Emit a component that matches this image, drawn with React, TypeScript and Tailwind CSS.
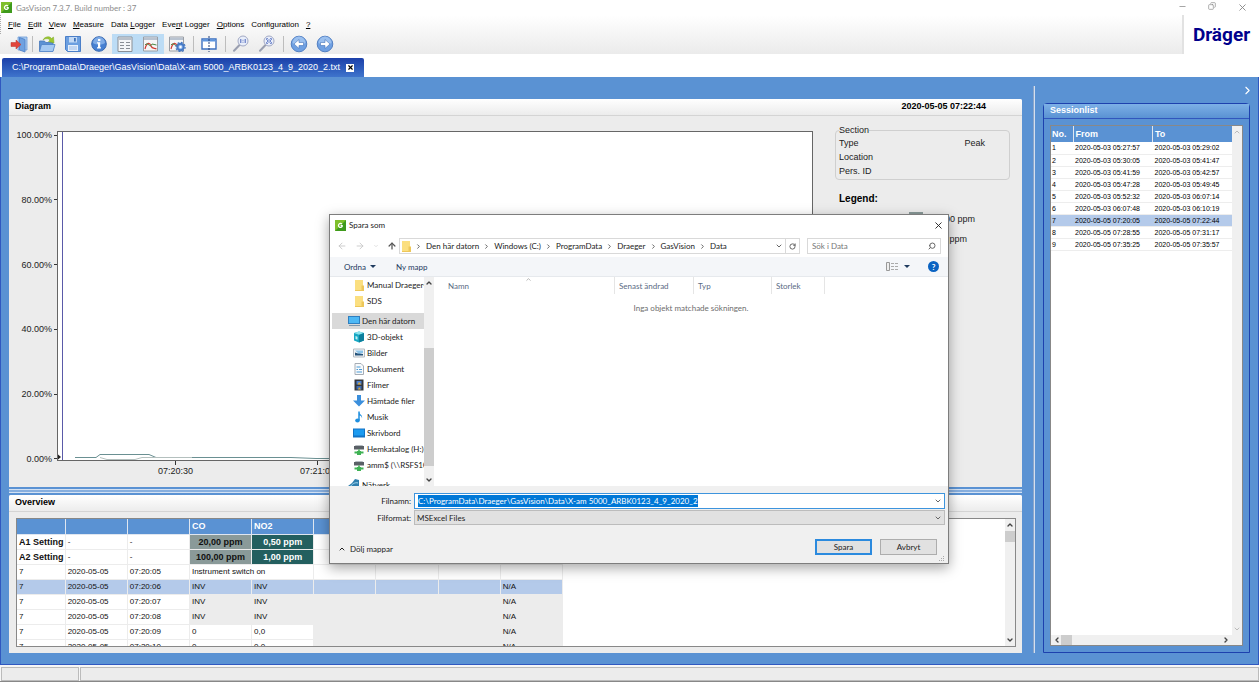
import { useEffect, useRef } from 'react';
import type { ReactNode } from 'react';
import {
  ArrowLeft, ArrowRight, ArrowUp, ChevronDown, ChevronLeft, ChevronRight, ChevronUp, Copy, Minus, RotateCw, Search, X,
} from 'lucide-react';

const FILE_PATH = 'C:\\ProgramData\\Draeger\\GasVision\\Data\\X-am 5000_ARBK0123_4_9_2020_2';

const MENU = [
  ['', 'F', 'ile'],
  ['', 'E', 'dit'],
  ['', 'V', 'iew'],
  ['', 'M', 'easure'],
  ['Data ', 'L', 'ogger'],
  ['Eve', 'n', 't Logger'],
  ['', 'O', 'ptions'],
  ['Confi', 'g', 'uration'],
  ['', '?', ''],
];

const SESSIONS = [
  ['1', '2020-05-03 05:27:57', '2020-05-03 05:29:02'],
  ['2', '2020-05-03 05:30:05', '2020-05-03 05:41:47'],
  ['3', '2020-05-03 05:41:59', '2020-05-03 05:42:57'],
  ['4', '2020-05-03 05:47:28', '2020-05-03 05:49:45'],
  ['5', '2020-05-03 05:52:32', '2020-05-03 06:07:14'],
  ['6', '2020-05-03 06:07:48', '2020-05-03 06:10:19'],
  ['7', '2020-05-05 07:20:05', '2020-05-05 07:22:44'],
  ['8', '2020-05-05 07:28:55', '2020-05-05 07:31:17'],
  ['9', '2020-05-05 07:35:25', '2020-05-05 07:35:57'],
];

const READINGS = [
  { time: '07:20:06', co: 'INV', no2: 'INV', selected: true },
  { time: '07:20:07', co: 'INV', no2: 'INV' },
  { time: '07:20:08', co: 'INV', no2: 'INV' },
  { time: '07:20:09', co: '0', no2: '0,0' },
  { time: '07:20:10', co: '0', no2: '0,0' },
];

const CRUMBS = ['Den här datorn', 'Windows (C:)', 'ProgramData', 'Draeger', 'GasVision', 'Data'];

/* ---------- icons ---------- */

const AppIcon = () => (
  <svg className="size-[11px] shrink-0" viewBox="0 0 11 11">
    <rect width="11" height="11" fill="#3f9a1c" />
    <path d="M0 0h11L0 11z" fill="#7fbf2a" />
    <path d="M7 4.2A2 2 0 1 0 7.2 6.4V5.6H5.6" fill="none" stroke="#fff" strokeWidth="1.2" />
  </svg>
);

const FolderIcon = () => (
  <svg className="h-[11px] w-[9px] shrink-0" viewBox="0 0 9 11">
    <path d="M0 0h8v10.5H0z" fill="#fbdf80" />
    <path d="M6.5 5.5H9V11H6.5zM0 10h8v1H0z" fill="#edc75a" />
  </svg>
);

const ExitIcon = () => (
  <svg width="18" height="18" viewBox="0 0 18 18">
    <path d="M8 2h9v13H8z" fill="#a9cbf0" stroke="#6d9bd6" strokeWidth=".8" />
    <path d="M9.500 2.500L15 4.500V17l-5.500-2z" fill="#6fa1e0" stroke="#4d7fc6" strokeWidth=".8" />
    <path d="M1 7.500h5V5l5 4.500L6 14v-2.500H1z" fill="#e2453c" stroke="#b8342d" strokeWidth=".5" />
  </svg>
);

const OpenIcon = () => (
  <svg width="18" height="18" viewBox="0 0 18 18">
    <path d="M1.500 6h5l1 1.500H15V16H1.500z" fill="#5c91d4" stroke="#4878ba" strokeWidth=".8" />
    <path d="M3.500 9.500H17L15 16.500H1.500z" fill="#a5c9f2" stroke="#4d82c8" strokeWidth=".8" />
    <path d="M5 5C7 1 12 1 13.500 3.500L15.500 2l.5 6-5.500-1.500L12 5c-2-2-5-1.500-7 0z" fill="#9cc72f" stroke="#7aa826" strokeWidth=".5" />
  </svg>
);

const SaveIcon = () => (
  <svg width="18" height="18" viewBox="0 0 18 18">
    <path d="M1.500 1.500h15v15h-13l-2-2z" fill="#6c9fe0" stroke="#4b7fc8" />
    <path d="M5 2h8v5.500H5z" fill="#c4daf5" />
    <path d="M10 3h1.800v3.500H10z" fill="#3d70b8" />
    <path d="M4 10h10v6H4z" fill="#e6effb" />
    <path d="M5 12h8M5 14h8" stroke="#9dbce6" />
  </svg>
);

const InfoIcon = () => (
  <svg width="16" height="16" viewBox="0 0 16 16">
    <circle cx="8" cy="8" r="7.300" fill="#4680d2" stroke="#3a69b0" />
    <path d="M2 7a6 6 0 0 1 12 0c-3 2-9 2-12 0z" fill="#7eabe6" />
    <path d="M7 3h2.400v2H7zM6 6.300h3.200v5H10v1.200H6v-1.200h1V7.500H6z" fill="#fff" />
  </svg>
);

const ListIcon = () => (
  <svg width="16" height="16" viewBox="0 0 16 16">
    <path d="M1 1h14v14.500H1z" fill="#f4f6f8" stroke="#8a8f96" />
    <path d="M1.500 1.500h13v2.500h-13z" fill="#b9c1cb" />
    <path d="M3 6.500h4M3 9.500h4M3 12.500h4M9 6.500H13M9 9.500H13M9 12.500H13" stroke="#8a8f96" />
  </svg>
);

const CurveIcon = ({ gear = false }) => (
  <svg width="18" height="16" viewBox="0 0 18 16">
    <path d="M1.500 1h14v14h-14z" fill="#f6f6f6" stroke="#9a9ea4" />
    <path d="M2 1.500h13V4H2z" fill="#b9c3d0" />
    <path d="M3 13c2-8 5-6 6-3s3 2 5.500 3" fill="none" stroke="#cf3b33" strokeWidth="1.200" />
    <path d="M3 9c3-4 5 4 7-1l4.500 1" fill="none" stroke="#4b8a45" />
    {gear && (
      <g>
        <circle cx="12.500" cy="11" r="3.200" fill="#8fb8ee" stroke="#4679c4" strokeWidth="2" />
        <circle cx="12.500" cy="11" r="4.600" fill="none" stroke="#4679c4" strokeWidth="1.200" strokeDasharray="1.800 1.800" />
        <circle cx="12.500" cy="11" r="1.200" fill="#fff" />
      </g>
    )}
  </svg>
);

const SplitIcon = () => (
  <svg width="16" height="16" viewBox="0 0 16 16">
    <path d="M1 3h14v10H1z" fill="#fff" stroke="#3d70c0" strokeWidth="1.400" />
    <path d="M1.500 3.500h13v2h-13z" fill="#5d95de" />
    <path d="M8 0v16" stroke="#223f78" strokeDasharray="2 1" />
  </svg>
);

const ZoomIcon = ({ fit = false }) => (
  <svg width="18" height="18" viewBox="0 0 18 18">
    <path d="M7.500 10L2 15.800" stroke="#9a9fb0" strokeWidth="2" strokeLinecap="round" />
    <circle cx="11" cy="6" r="5" fill="#e9eefa" stroke="#a2a9c4" />
    {fit
      ? <path d="M8.500 5V3.500H10M12 3.500h1.500V5M13.500 7v1.500H12M10 8.500H8.500V7M9.500 5h3v2h-3z" fill="none" stroke="#6079c4" strokeWidth=".8" />
      : <path d="M8.800 4v4M13.200 4v4M11 4.800v.8M11 6.800v.8" stroke="#4a65bb" />}
  </svg>
);

const RoundArrow = ({ right = false }) => (
  <svg width="18" height="18" viewBox="0 0 18 18">
    <circle cx="9" cy="9" r="7.800" fill="#6fa0e2" stroke="#5480c2" />
    <path d="M2.500 8a6.500 6.500 0 0 1 13 0c-4 2-9 2-13 0z" fill="#9bc0ef" />
    {right
      ? <path d="M4.500 7.500H9V4.500l5 4.500-5 4.500v-3H4.500z" fill="#fff" stroke="#4674b8" strokeWidth=".6" />
      : <path d="M13.500 7.500H9V4.500L4 9l5 4.500v-3h4.500z" fill="#fff" stroke="#4674b8" strokeWidth=".6" />}
  </svg>
);

const TREE_ICONS: Record<string, ReactNode> = {
  pc: <><path d="M0 1h12v8H0z" fill="#2f7fc0" /><path d="M1 2h10v6H1z" fill="#4db8f5" /><path d="M1 10.500h11" stroke="#7d97ad" /></>,
  cube: <><path d="M1 2l5-1.500L11 2v7.500L6 11.500 1 9.500z" fill="#18a8c4" /><path d="M1 2l5-1.500L11 2 6 3.800z" fill="#8ee4ee" /><path d="M6 4l5-2v7.500l-5 2z" fill="#0e7f9c" /><path d="M2.500 5l2 .7v3L2.500 8z" fill="#bff1f6" /></>,
  picture: <><path d="M.5 2h11v8H.5z" fill="#f2f4f6" stroke="#b4bac0" /><path d="M2 3.500h8V6L6 7z" fill="#8cc4ea" /><path d="M2 5.500l3 1 5 .5v1.500H2z" fill="#24527a" /></>,
  doc: <><path d="M2 .5h6L10.500 3v8.500H2z" fill="#f8fafc" stroke="#a6adb5" /><path d="M3.500 4h4M6 6.500h3M3.500 6.500h1.500M3.500 9H9" stroke="#4b9ad4" /></>,
  film: <><path d="M1.500.5h9v11h-9z" fill="#33363b" /><path d="M3.500 2h5v3.500h-5z" fill="#4a7fd0" /><path d="M3.500 7h5v3.500h-5z" fill="#3c6bb5" /><path d="M6 3l2.500 2.500h-4zM6 8l2 2.500H5z" fill="#d9a93c" /></>,
  down: <path d="M4 0h4v5.500h4L6 11.500 0 5.500h4z" fill="#3b8fdc" />,
  music: <><path d="M6 .5v8.500" stroke="#1f8fdf" strokeWidth="1.500" /><ellipse cx="4.500" cy="9.500" rx="2.300" ry="1.900" fill="#1f8fdf" /><path d="M6 .5c0 3 4 3 3 7C9 5 7 4.500 6 4.500z" fill="#1f8fdf" /></>,
  desktop: <><path d="M0 1.500h12v9H0z" fill="#1273c4" /><path d="M1 2.500h10v6H1z" fill="#1c9bf0" /></>,
  drive: <><path d="M1 3h10v3.500H1z" fill="#5a6066" /><path d="M2 3h8l-.5-1h-7z" fill="#b6bcc1" /><path d="M5.200 6.500h1.600v2H5.200zM1.500 8.500h9v2h-9zM4 8h4v4H4z" fill="#3fb254" /></>,
  network: <><path d="M0 7h12v5H0z" fill="#3d9bd4" /><path d="M0 7l4-3 3-4 4 1v8H4z" fill="#2f7fae" /><path d="M2 8c2-3 5-5 8-4" stroke="#a8dcf2" fill="none" /></>,
};

const TREE = [
  { kind: 'cube', label: '3D-objekt' },
  { kind: 'picture', label: 'Bilder' },
  { kind: 'doc', label: 'Dokument' },
  { kind: 'film', label: 'Filmer' },
  { kind: 'down', label: 'Hämtade filer' },
  { kind: 'music', label: 'Musik' },
  { kind: 'desktop', label: 'Skrivbord' },
  { kind: 'drive', label: 'Hemkatalog (H:)' },
  { kind: 'drive', label: 'amm$ (\\\\RSFS10' },
];

const TreeIcon = ({ kind }: { kind: string }) => (
  <svg className="size-3 shrink-0" viewBox="0 0 12 12">{TREE_ICONS[kind]}</svg>
);

/* ---------- small parts ---------- */

const ToolButton = ({ label, active = false, children }: { label: string; active?: boolean; children: ReactNode }) => (
  <button aria-label={label} className={`flex h-5 w-[26px] items-center justify-center ${active ? 'bg-[#bcdcf5]' : ''}`}>
    {children}
  </button>
);

const ToolSeparator = () => (
  <div className="flex w-1.5 justify-center"><div className="h-4 w-px bg-[#bdbdbd]" /></div>
);

const PanelHeader = ({ title, right }: { title: string; right?: string }) => (
  <div className="flex h-[17px] shrink-0 items-center rounded-t-xs border-b border-[#d4d4d4] bg-linear-to-b from-white to-[#ececec] pr-9 pl-1.5 text-[9px] font-bold text-black">
    <h2>{title}</h2>
    {right && <span className="ml-auto">{right}</span>}
  </div>
);

const TreeRow = ({ icon, label, indent = true, selected = false }: { icon: ReactNode; label: string; indent?: boolean; selected?: boolean }) => (
  <li className={`flex h-4 shrink-0 items-center gap-0.5 whitespace-nowrap ${indent ? 'pl-[21px]' : 'pl-4'} ${selected ? 'bg-[#d9d9d9]' : ''}`}>
    <span className="flex w-3 shrink-0 justify-center">{icon}</span>
    <span>{label}</span>
  </li>
);

/* ---------- main window ---------- */

const Header = () => (
  <header>
    <div className="flex h-[15px] items-center gap-1 bg-white pr-0.5 pl-px font-[Lato,sans-serif] text-[8px] text-[#8c8c8c]">
      <AppIcon />
      <span>GasVision 7.3.7. Build number : 37</span>
      <div className="ml-auto flex text-[#888]">
        <button aria-label="Minimize" className="flex w-[30px] justify-center"><Minus size={9} strokeWidth={2} /></button>
        <button aria-label="Restore" className="flex w-[30px] justify-center"><Copy size={8} strokeWidth={2} className="-scale-x-100" /></button>
        <button aria-label="Close" className="flex w-[30px] justify-center"><X size={11} strokeWidth={2} /></button>
      </div>
    </div>
    <div className="flex bg-linear-to-b from-white to-[#ebebeb]">
      <div className="flex-1">
        <nav className="flex h-[19px] items-center gap-[7px] border-l border-dotted border-[#aaa] pl-[7px] text-[8px] text-black">
          {MENU.map(([before, key, after]) => (
            <button key={before + key + after} className="whitespace-pre">
              {before}<u>{key}</u>{after}
            </button>
          ))}
        </nav>
        <div className="flex h-5 items-center pl-1.5">
          <ToolButton label="Exit"><ExitIcon /></ToolButton>
          <div className="h-4 w-0.5 border-l border-[#bdbdbd]" />
          <ToolButton label="Open"><OpenIcon /></ToolButton>
          <ToolButton label="Save"><SaveIcon /></ToolButton>
          <ToolButton label="Info"><InfoIcon /></ToolButton>
          <ToolButton label="Table" active><ListIcon /></ToolButton>
          <ToolButton label="Diagram" active><CurveIcon /></ToolButton>
          <ToolButton label="Diagram settings"><CurveIcon gear /></ToolButton>
          <ToolSeparator />
          <ToolButton label="Section"><SplitIcon /></ToolButton>
          <ToolSeparator />
          <ToolButton label="Original size"><ZoomIcon /></ToolButton>
          <ToolButton label="Fit"><ZoomIcon fit /></ToolButton>
          <ToolSeparator />
          <ToolButton label="Back"><RoundArrow /></ToolButton>
          <ToolButton label="Forward"><RoundArrow right /></ToolButton>
        </div>
      </div>
      <div className="flex w-[77px] items-center justify-center border-l-2 border-[#e2e2e2] bg-white font-[Roboto,sans-serif] text-[19px] leading-none font-bold text-[#00008c]">
        Dräger
      </div>
    </div>
  </header>
);

const Diagram = () => (
  <section className="flex min-h-0 flex-1 flex-col rounded-t-xs bg-[#ececec]">
    <PanelHeader title="Diagram" right="2020-05-05 07:22:44" />
    <div className="flex min-h-0 flex-1">
      <div className="flex min-w-0 flex-1 pt-[15px]">
        <div className="mb-[22px] -mt-0.5 flex w-12 flex-col justify-between text-right text-[9px] leading-3 text-[#222]">
          {['100.00%', '80.00%', '60.00%', '40.00%', '20.00%', '0.00%'].map((tick) => (
            <div key={tick} className="flex items-center justify-end gap-0.5">
              {tick}<div className="h-px w-[3px] bg-[#333]" />
            </div>
          ))}
        </div>
        <div className="flex min-w-0 flex-1 flex-col">
          <div className="flex flex-1 items-end border border-[#666] bg-white">
            <svg className="h-4 w-1 shrink-0" viewBox="0 0 4 16">
              <path d="M0 10.500L3 13 0 15.500z" fill="#222" />
            </svg>
            <div className="h-full w-px bg-[#5a5aa8]" />
            <svg className="h-4 flex-1 overflow-hidden">
              <path d="M12 13.500h21l4-3h49l7 3h135l25 1h500" fill="none" stroke="#6a9092" />
              <path d="M37 13.500l7 2h28l7-2h50" fill="none" stroke="#b4c0be" />
            </svg>
          </div>
          <div className="flex h-[26px] text-[9px] leading-3 text-[#222]">
            {['07:20:30', '07:21:00', '07:21:30', '07:22:00', '07:22:30'].map((tick) => (
              <div key={tick} className="ml-[47px] flex w-[95px] shrink-0 flex-col items-center first:ml-[71px]">
                <div className="h-1 w-px bg-[#333]" />{tick}
              </div>
            ))}
          </div>
        </div>
      </div>
      <div className="w-[209px] pt-2 pr-3 pl-[22px] text-[9px] text-[#222]">
        <fieldset className="h-14 rounded-sm border border-[#cfcfcf] pr-6 pl-[3px]">
          <legend className="leading-3">Section</legend>
          <div className="flex leading-[14px]"><span>Type</span><span className="ml-auto">Peak</span></div>
          <div className="leading-[14px]">Location</div>
          <div className="leading-[14px]">Pers. ID</div>
        </fieldset>
        <h3 className="mt-3 pl-1 text-[10px] leading-[14px] font-bold text-black">Legend:</h3>
        <ul className="mt-1 pr-[35px] pl-1">
          <li className="flex h-5 items-center">
            <input type="checkbox" aria-label="CO" className="mr-1 size-3 appearance-none border border-[#555] bg-white" />CO
            <span className="ml-auto h-4 w-3.5 bg-[#8a9a99]" />
            <span className="w-[52px] text-right">100,00 ppm</span>
          </li>
          <li className="flex h-5 items-center">
            <input type="checkbox" aria-label="NO2" className="mr-1 size-3 appearance-none border border-[#555] bg-white" />NO2
            <span className="ml-auto h-4 w-3.5 bg-[#235f5f]" />
            <span className="w-[52px] pr-2 text-right">1,00 ppm</span>
          </li>
        </ul>
      </div>
    </div>
  </section>
);

const Overview = () => (
  <section className="flex h-[158px] shrink-0 flex-col rounded-t-xs bg-[#ececec]">
    <PanelHeader title="Overview" />
    <div className="m-1.5 ml-[7px] flex min-h-0 flex-1 border border-[#888] bg-white">
      <div className="min-w-0 flex-1 overflow-hidden">
        <table className="w-[546px] table-fixed border-collapse text-left text-[8px] leading-[14px] text-[#111]">
          <colgroup>
            <col className="w-12" />
            {Array.from({ length: 8 }, (_, i) => <col key={i} className="w-[62px]" />)}
          </colgroup>
          <thead>
            <tr className="h-[15px] bg-[#5a92d3] text-[9px] text-white">
              {['', '', '', 'CO', 'NO2', '', '', '', ''].map((head, i) => (
                <th key={i} className="border-r border-b border-[#dfe6f0] px-0.5 py-0">{head}</th>
              ))}
            </tr>
          </thead>
          <tbody>
            {[['A1 Setting', '20,00 ppm', '0,50 ppm'], ['A2 Setting', '100,00 ppm', '1,00 ppm']].map(([name, co, no2]) => (
              <tr key={name} className="h-[15px]">
                <th className="border-r border-b border-[#ececec] py-0 pl-0.5 text-[9px] whitespace-nowrap">{name}</th>
                <td className="border-r border-b border-[#ececec] px-0.5 py-0">-</td>
                <td className="border-r border-b border-[#ececec] px-0.5 py-0">-</td>
                <td className="border-r border-b border-[#ececec] bg-[#8a9a99] p-0 text-center text-[9px] font-bold whitespace-nowrap">{co}</td>
                <td className="border-r border-b border-[#ececec] bg-[#235f5f] p-0 text-center text-[9px] font-bold whitespace-nowrap text-white">{no2}</td>
                {[0, 1, 2, 3].map((i) => <td key={i} className="border-r border-b border-[#ececec]" />)}
              </tr>
            ))}
            <tr className="h-[15px]">
              <td className="border-r border-b border-[#ececec] px-0.5 py-0">7</td>
              <td className="border-r border-b border-[#ececec] px-0.5 py-0">2020-05-05</td>
              <td className="border-r border-b border-[#ececec] px-0.5 py-0">07:20:05</td>
              <td colSpan={2} className="border-r border-b border-[#ececec] px-0.5 py-0">Instrument switch on</td>
              {[0, 1, 2, 3].map((i) => <td key={i} className="border-r border-b border-[#ececec]" />)}
            </tr>
            {READINGS.map(({ time, co, no2, selected }) => {
              const cell = 'border-r border-b border-[#ececec] px-0.5 py-0';
              const grey = selected ? '' : 'bg-[#ececec]';
              const value = co === 'INV' ? grey : '';
              return (
                <tr key={time} className={`h-[15px] ${selected ? 'bg-[#b4caea]' : ''}`}>
                  <td className={cell}>7</td>
                  <td className={cell}>2020-05-05</td>
                  <td className={cell}>{time}</td>
                  <td className={`${cell} ${value}`}>{co}</td>
                  <td className={`${cell} ${value}`}>{no2}</td>
                  <td className={`${cell} ${grey}`} />
                  <td className={`${cell} ${grey}`} />
                  <td className={`${cell} ${grey}`} />
                  <td className={`${cell} ${grey}`}>N/A</td>
                </tr>
              );
            })}
          </tbody>
        </table>
      </div>
      <div className="flex w-2.5 flex-col items-center bg-[#f0f0f0] py-0.5 text-[#444]">
        <ChevronUp size={8} strokeWidth={4} />
        <div className="mt-0.5 h-[11px] w-full bg-[#cdcdcd]" />
        <ChevronDown size={8} strokeWidth={4} className="mt-auto" />
      </div>
    </div>
  </section>
);

const SessionList = () => (
  <section className="mb-[11px] flex min-h-0 flex-1 flex-col rounded-t-sm border border-[#1d41ae]">
    <h2 className="flex h-[15px] items-center border-b border-[#3156bd] bg-linear-to-b from-[#7db0e6] to-[#5a92d3] pl-1.5 text-[9px] font-bold text-white">
      Sessionlist
    </h2>
    <div className="m-1.5 flex min-h-0 flex-1 flex-col border border-[#888] bg-white">
      <div className="flex min-h-0 flex-1">
        <div className="min-w-0 flex-1 overflow-hidden">
          <table className="w-full table-fixed border-collapse text-left text-[7px] leading-[11px] text-black">
            <thead>
              <tr className="h-4 bg-[#5a92d3] text-[9px] text-white">
                <th className="w-[22px] border-r border-[#dfe6f0] pl-px">No.</th>
                <th className="border-r border-[#dfe6f0] pl-0.5">From</th>
                <th className="pl-0.5">To</th>
              </tr>
            </thead>
            <tbody>
              {SESSIONS.map(([no, from, to]) => (
                <tr key={no} className={`h-3 border-b border-[#ededed] ${no === '7' ? 'bg-[#b4caea]' : ''}`}>
                  <td className="pl-px">{no}</td>
                  <td className="pl-0.5 whitespace-nowrap">{from}</td>
                  <td className="pl-0.5 whitespace-nowrap">{to}</td>
                </tr>
              ))}
            </tbody>
          </table>
        </div>
        <div className="flex w-2.5 flex-col items-center justify-between bg-[#f0f0f0] py-0.5 text-[#bbb]">
          <ChevronUp size={8} strokeWidth={3} />
          <ChevronDown size={8} strokeWidth={3} />
        </div>
      </div>
      <div className="flex h-2.5 items-center bg-[#f0f0f0] pr-3 pl-0.5 text-[#444]">
        <ChevronLeft size={8} strokeWidth={4} />
        <div className="h-full w-[11px] bg-[#cdcdcd]" />
        <ChevronRight size={8} strokeWidth={4} className="ml-auto" />
      </div>
    </div>
  </section>
);

/* ---------- save dialog ---------- */

const SaveDialog = () => {
  const nameRef = useRef<HTMLInputElement>(null);

  useEffect(() => {
    nameRef.current?.focus();
    nameRef.current?.select();
  }, []);

  return (
    <div
      role="dialog"
      aria-label="Spara som"
      className="absolute top-[214px] left-[329px] flex h-[350px] w-[620px] flex-col border border-[#7d7d7d] bg-white font-[Lato,sans-serif] text-[8px] leading-3 text-[#222] shadow-[0_4px_12px_rgba(0,0,0,0.35)]"
    >
      <div className="flex h-5 shrink-0 items-center gap-[3px] pr-1 pl-[5px]">
        <AppIcon />
        <h2>Spara som</h2>
        <button aria-label="Stäng" className="ml-auto"><X size={11} strokeWidth={2} /></button>
      </div>

      <div className="flex h-[22px] shrink-0 items-center px-[7px]">
        <div className="flex w-[62px] items-center gap-2 text-[#c4c4c4]">
          <ArrowLeft size={10} /><ArrowRight size={10} /><ChevronDown size={6} /><ArrowUp size={10} strokeWidth={3} className="text-[#555]" />
        </div>
        <div className="flex h-4 flex-1 items-center border border-[#d9d9d9] pl-0.5">
          <FolderIcon />
          {CRUMBS.map((crumb) => (
            <span key={crumb} className="flex items-center">
              <ChevronRight size={7} strokeWidth={3} className="mx-1 text-[#555]" />
              <button>{crumb}</button>
            </span>
          ))}
          <ChevronDown size={8} strokeWidth={3} className="mr-0.5 ml-auto text-[#666]" />
          <button aria-label="Uppdatera" className="flex h-full w-3.5 items-center justify-center border-l border-[#d9d9d9] text-[#555]">
            <RotateCw size={7} strokeWidth={3} />
          </button>
        </div>
        <label className="ml-[7px] flex h-4 w-[134px] items-center border border-[#d9d9d9] px-1">
          <input aria-label="Sök" placeholder="Sök i Data" className="min-w-0 flex-1 outline-none placeholder:text-[#777]" />
          <Search size={8} strokeWidth={3} className="-scale-x-100 text-[#666]" />
        </label>
      </div>

      <div className="flex h-5 shrink-0 items-center border-b border-[#e6e9ed] bg-[#f4f6f9] pr-[9px] pl-3.5 text-[#1f3a5f]">
        <button className="flex items-center gap-1">
          Ordna <span className="border-x-[3px] border-t-[3px] border-x-transparent border-t-[#1f3a5f]" />
        </button>
        <button className="ml-5">Ny mapp</button>
        <button aria-label="Vy" className="ml-auto flex items-center gap-1.5">
          <svg width="12" height="9" viewBox="0 0 12 9">
            <path d="M.5.500h3v8h-3z" fill="#eee" stroke="#999" />
            <path d="M5 1.500h3M9 1.500h3M5 4.500h3M9 4.500h3M5 7.500h3M9 7.500h3" stroke="#aaa" />
          </svg>
          <span className="border-x-[3px] border-t-[3px] border-x-transparent border-t-[#1f3a5f]" />
        </button>
        <button aria-label="Hjälp" className="ml-[18px] flex size-[11px] items-center justify-center rounded-full bg-[#0a63c2] font-bold text-white">?</button>
      </div>

      <div className="flex min-h-0 flex-1 pl-0.5">
        <ul className="flex w-[92px] flex-col overflow-hidden">
          <TreeRow icon={<FolderIcon />} label="Manual Draeger-" />
          <TreeRow icon={<FolderIcon />} label="SDS" />
          <li className="h-1 shrink-0" />
          <TreeRow icon={<TreeIcon kind="pc" />} label="Den här datorn" indent={false} selected />
          {TREE.map(({ kind, label }) => (
            <TreeRow key={label} icon={<TreeIcon kind={kind} />} label={label} />
          ))}
          <li className="h-1 shrink-0" />
          <TreeRow icon={<TreeIcon kind="network" />} label="Nätverk" indent={false} />
        </ul>
        <div className="flex w-2.5 flex-col items-center bg-[#f0f0f0] py-0.5 text-[#444]">
          <ChevronUp size={8} strokeWidth={4} />
          <div className="mt-[61px] h-[118px] w-full bg-[#cdcdcd]" />
          <ChevronDown size={8} strokeWidth={4} className="mt-auto" />
        </div>
        <div className="flex-1">
          <div className="flex h-[17px] items-center text-[#5a6b84]">
            <div className="flex h-full w-[181px] items-center border-r border-[#e5e5e5] pl-3.5">
              Namn<ChevronUp size={7} className="mb-3 ml-14 text-[#888]" />
            </div>
            <div className="flex h-full w-[79px] items-center border-r border-[#e5e5e5] pl-1">Senast ändrad</div>
            <div className="flex h-full w-[78px] items-center border-r border-[#e5e5e5] pl-1">Typ</div>
            <div className="flex h-full w-[53px] items-center border-r border-[#e5e5e5] pl-1">Storlek</div>
          </div>
          <p className="mt-2 text-center text-[#6d6d6d]">Inga objekt matchade sökningen.</p>
        </div>
      </div>

      <div className="flex h-[77px] shrink-0 flex-col bg-[#f0f0f0] pt-[7px] pr-[3px] pl-2">
        <div className="flex items-center">
          <label htmlFor="filename" className="w-[76px] pr-[3px] text-right">Filnamn:</label>
          <div className="flex h-4 flex-1 items-center border border-[#3d94dd] bg-white pr-0.5">
            <input
              id="filename"
              ref={nameRef}
              defaultValue={FILE_PATH}
              className="min-w-0 flex-1 pl-[3px] outline-none selection:bg-[#0078d7] selection:text-white"
            />
            <ChevronDown size={8} strokeWidth={3} className="text-[#666]" />
          </div>
        </div>
        <div className="mt-px flex items-center">
          <label htmlFor="filetype" className="w-[76px] pr-[3px] text-right">Filformat:</label>
          <div className="flex h-[15px] flex-1 items-center border border-[#bcbcbc] bg-[#e1e1e1] pr-0.5">
            <select id="filetype" className="flex-1 appearance-none pl-0.5">
              <option>MSExcel Files</option>
            </select>
            <ChevronDown size={8} strokeWidth={3} className="text-[#666]" />
          </div>
        </div>
        <div className="mt-3.5 flex items-center pr-2">
          <button className="mt-1 flex items-center gap-1"><ChevronUp size={8} strokeWidth={3} />Dölj mappar</button>
          <button className="ml-auto h-4 w-[57px] border-2 border-[#2b8ade] bg-[#e1e1e1] leading-none">Spara</button>
          <button className="ml-2 h-4 w-[57px] border border-[#adadad] bg-[#e1e1e1] leading-none">Avbryt</button>
        </div>
        <svg width="6" height="6" className="mt-auto mb-px ml-auto shrink-0" viewBox="0 0 6 6">
          <path d="M4 0h1v1H4zM2 2h1v1H2zM4 2h1v1H4zM0 4h1v1H0zM2 4h1v1H2zM4 4h1v1H4z" fill="#aaa" />
        </svg>
      </div>
    </div>
  );
};

export default function App() {
  return (
    <div className="relative flex h-screen flex-col overflow-hidden bg-white font-['Liberation_Sans',Arial,sans-serif]">
      <Header />

      <div className="flex h-[23px] shrink-0 items-end pl-0.5">
        <div className="flex h-[19px] items-center gap-1.5 rounded-t-xs bg-linear-to-b from-[#1c3fa9] to-[#3f74cc] px-2.5 text-[9px] text-white">
          <span>{`${FILE_PATH}.txt`}</span>
          <button aria-label="Close tab" className="flex size-2 items-center justify-center bg-white text-black"><X size={7} strokeWidth={4} /></button>
        </div>
      </div>

      <main className="flex min-h-0 flex-1 border-x border-b border-[#3058c0] bg-[#5a92d3]">
        <div className="flex min-w-0 flex-1 flex-col pt-[22px] pr-[11px] pb-[11px] pl-2">
          <Diagram />
          <div className="my-0.5 h-1 shrink-0 border-y border-[#d3e1f3] bg-[#86aede]" />
          <Overview />
        </div>
        <div className="mt-[9px] mb-[11px] w-0.5 border-r border-l border-r-[#d5dfee] border-l-[#8aa6cc]" />
        <aside className="flex w-[223px] flex-col px-2">
          <button aria-label="Collapse" className="ml-auto flex h-[26px] items-center text-white"><ChevronRight size={13} className="-mr-1" /></button>
          <SessionList />
        </aside>
      </main>

      <footer className="flex h-[17px] shrink-0 gap-px border-b border-[#888] bg-[#f6f6f6] pt-0.5 pl-px">
        <div className="w-[78px] border border-[#bbb] bg-[#ececec]" />
        <div className="flex-1 border border-[#bbb] bg-[#ececec]" />
      </footer>

      <SaveDialog />
    </div>
  );
}
